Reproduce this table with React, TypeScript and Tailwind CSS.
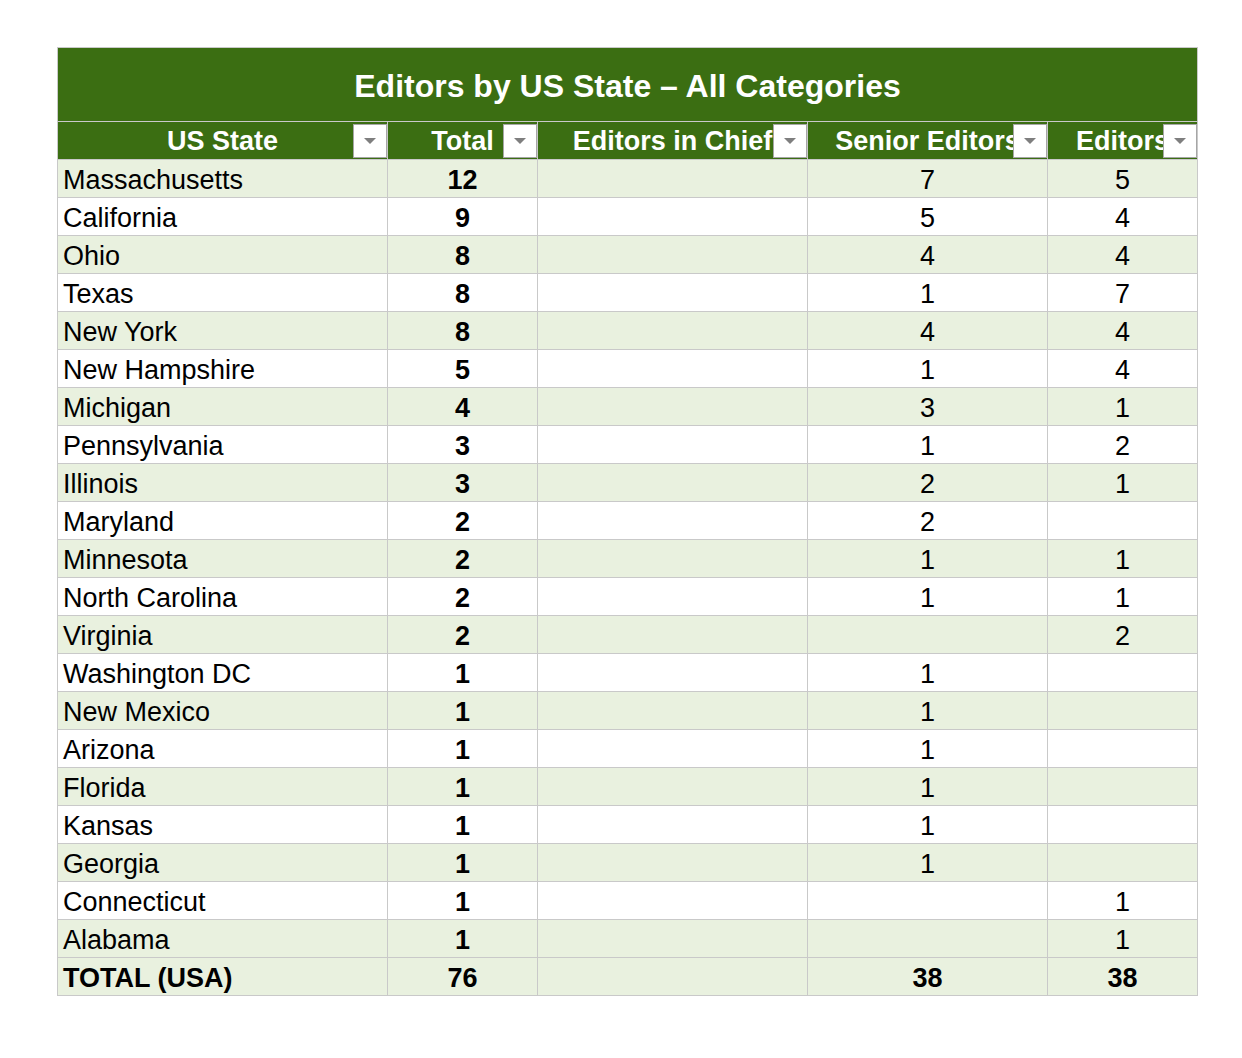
const rows: [string, number, number | null, number | null][] = [
  ["Massachusetts", 12, 7, 5],
  ["California", 9, 5, 4],
  ["Ohio", 8, 4, 4],
  ["Texas", 8, 1, 7],
  ["New York", 8, 4, 4],
  ["New Hampshire", 5, 1, 4],
  ["Michigan", 4, 3, 1],
  ["Pennsylvania", 3, 1, 2],
  ["Illinois", 3, 2, 1],
  ["Maryland", 2, 2, null],
  ["Minnesota", 2, 1, 1],
  ["North Carolina", 2, 1, 1],
  ["Virginia", 2, null, 2],
  ["Washington DC", 1, 1, null],
  ["New Mexico", 1, 1, null],
  ["Arizona", 1, 1, null],
  ["Florida", 1, 1, null],
  ["Kansas", 1, 1, null],
  ["Georgia", 1, 1, null],
  ["Connecticut", 1, null, 1],
  ["Alabama", 1, null, 1],
];

const headers = [
  { label: "US State", w: "w-[330px]" },
  { label: "Total", w: "w-[150px]" },
  { label: "Editors in Chief", w: "w-[270px]" },
  { label: "Senior Editors", w: "w-[240px]" },
  { label: "Editors", w: "w-[150px]" },
];

function FilterButton() {
  return (
    <span className="absolute right-0 top-[2px] flex h-[34px] w-[34px] items-center justify-center border border-[#a6a6a6] bg-white">
      <svg width="12" height="6" viewBox="0 0 12 6">
        <polygon points="0,0 12,0 6,6" fill="#7f7f7f" />
      </svg>
    </span>
  );
}

function Row({
  cells,
  green,
  bold,
}: {
  cells: [string, number | null, number | null, number | null, number | null];
  green: boolean;
  bold?: boolean;
}) {
  const base =
    "box-border flex h-[38px] items-center pt-[2px] border-r border-[#c9c9c9] overflow-hidden whitespace-nowrap";
  return (
    <div
      className={`flex h-[38px] box-border border-b border-[#c9c9c9] text-[27px] text-black ${
        green ? "bg-[#e9f1df]" : "bg-white"
      }`}
    >
      <div className={`${base} w-[330px] pl-[5px] ${bold ? "font-bold" : ""}`}>{cells[0]}</div>
      <div className={`${base} w-[150px] justify-center font-bold`}>{cells[1]}</div>
      <div className={`${base} w-[270px] justify-center ${bold ? "font-bold" : ""}`}>{cells[2]}</div>
      <div className={`${base} w-[240px] justify-center ${bold ? "font-bold" : ""}`}>{cells[3]}</div>
      <div className={`${base} w-[150px] justify-center ${bold ? "font-bold" : ""}`}>{cells[4]}</div>
    </div>
  );
}

export default function App() {
  const totalAll = rows.reduce((s, r) => s + r[1], 0);
  const totalSenior = rows.reduce((s, r) => s + (r[2] ?? 0), 0);
  const totalEditors = rows.reduce((s, r) => s + (r[3] ?? 0), 0);

  return (
    <div className="min-h-[1058px] bg-white pl-[57px] pt-[47px] font-['Liberation_Sans',Arial,sans-serif] leading-none">
      <div className="box-border w-[1141px] border-l border-t border-[#c9c9c9]">
        {/* title bar */}
        <div className="box-border flex h-[74px] items-center justify-center border-b border-r border-[#c9c9c9] bg-[#3b6e12] pt-[2px] text-[32px] font-bold text-white">
          Editors by US State – All Categories
        </div>

        {/* column headers */}
        <div className="box-border flex h-[38px] border-b border-[#c9c9c9] bg-[#3b6e12] text-[27px] font-bold text-white">
          {headers.map((h) => (
            <div
              key={h.label}
              className={`relative box-border flex h-full items-center justify-center overflow-hidden whitespace-nowrap border-r border-[#c9c9c9] pt-[1px] ${h.w}`}
            >
              {h.label}
              <FilterButton />
            </div>
          ))}
        </div>

        {rows.map((r, i) => (
          <Row key={r[0]} cells={[r[0], r[1], null, r[2], r[3]]} green={i % 2 === 0} />
        ))}
        <Row cells={["TOTAL (USA)", totalAll, null, totalSenior, totalEditors]} green bold />
      </div>
    </div>
  );
}
